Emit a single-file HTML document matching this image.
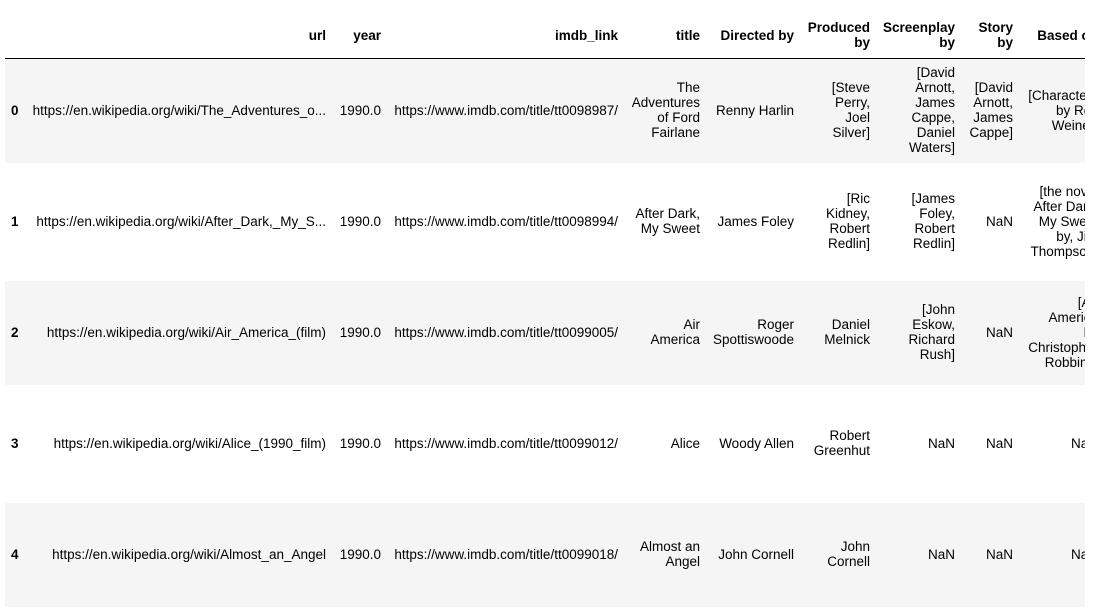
<!DOCTYPE html>
<html><head><meta charset="utf-8"><style>
body{margin:0;width:1093px;height:614px;background:#fff;overflow:hidden;font-family:"Liberation Sans",Arial,sans-serif;font-size:13.5px;line-height:15px;color:#000;}
#wrap{position:absolute;left:0;top:0;width:1085px;height:614px;overflow:hidden;}
.bg{position:absolute;left:5px;width:1100px;}
.c{position:absolute;display:flex;align-items:center;justify-content:flex-end;text-align:right;white-space:nowrap;}
.h{font-weight:bold;}
.i{font-weight:bold;justify-content:flex-start;}
</style></head><body><div id="wrap">
<div class="bg" style="top:58px;height:1px;background:#000"></div>
<div class="bg" style="top:59px;height:104px;background:#f5f5f5"></div>
<div class="bg" style="top:281px;height:104px;background:#f5f5f5"></div>
<div class="bg" style="top:503px;height:104px;background:#f5f5f5"></div>
<div id="t"></div>
</div>
<script>
var R=[326,381,618,700,794,870,955,1013,1098];
var W=[310,55,240,90,100,80,90,60,100];
var html='';
function cell(top,h,col,txt,cls){html+='<div class="c '+(cls||'')+'" style="top:'+(top-1)+'px;height:'+h+'px;left:'+(R[col]-W[col])+'px;width:'+W[col]+'px">'+txt+'</div>';}
var hd=['url','year','imdb_link','title','Directed by','Produced<br>by','Screenplay<br>by','Story<br>by','Based on'];
hd.forEach(function(t,i){cell(14,44,i,t,'h');});
var rows=[
[59,104,['https://en.wikipedia.org/wiki/The_Adventures_o...','1990.0','https://www.imdb.com/title/tt0098987/','The<br>Adventures<br>of Ford<br>Fairlane','Renny Harlin','[Steve<br>Perry,<br>Joel<br>Silver]','[David<br>Arnott,<br>James<br>Cappe,<br>Daniel<br>Waters]','[David<br>Arnott,<br>James<br>Cappe]','[Characters<br>by Rex<br>Weiner]']],
[163,118,['https://en.wikipedia.org/wiki/After_Dark,_My_S...','1990.0','https://www.imdb.com/title/tt0098994/','After Dark,<br>My Sweet','James Foley','[Ric<br>Kidney,<br>Robert<br>Redlin]','[James<br>Foley,<br>Robert<br>Redlin]','NaN','[the novel<br>After Dark,<br>My Sweet<br>by, Jim<br>Thompson]']],
[281,104,['https://en.wikipedia.org/wiki/Air_America_(film)','1990.0','https://www.imdb.com/title/tt0099005/','Air<br>America','Roger<br>Spottiswoode','Daniel<br>Melnick','[John<br>Eskow,<br>Richard<br>Rush]','NaN','[Air<br>America<br>by<br>Christopher<br>Robbins]']],
[385,118,['https://en.wikipedia.org/wiki/Alice_(1990_film)','1990.0','https://www.imdb.com/title/tt0099012/','Alice','Woody Allen','Robert<br>Greenhut','NaN','NaN','NaN']],
[503,104,['https://en.wikipedia.org/wiki/Almost_an_Angel','1990.0','https://www.imdb.com/title/tt0099018/','Almost an<br>Angel','John Cornell','John<br>Cornell','NaN','NaN','NaN']]];
rows.forEach(function(r,k){
 html+='<div class="c i" style="top:'+(r[0]-1)+'px;height:'+r[1]+'px;left:11px;width:20px">'+k+'</div>';
 r[2].forEach(function(t,i){cell(r[0],r[1],i,t);});
});
document.getElementById('t').innerHTML=html;
</script>
</body></html>
